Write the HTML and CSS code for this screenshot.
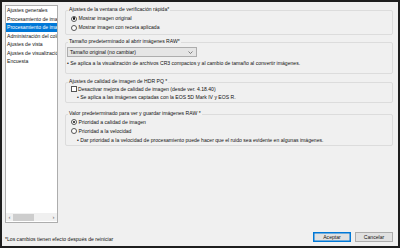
FILE: index.html
```html
<!DOCTYPE html>
<html lang="es">
<head>
    <meta charset="UTF-8">
    <meta name="viewport" content="width=device-width, initial-scale=1.0">
    <title>Preferencias</title>
    <link rel="stylesheet" href="styles.css">
</head>
<body>
<div class="window">
    <div class="main">
        <div class="sidebar">
            <ul class="nav-list">
                <li>Ajustes generales</li>
                <li>Procesamiento de imagen RAW</li>
                <li class="selected">Procesamiento de imagen HDR</li>
                <li>Administración del color</li>
                <li>Ajustes de vista</li>
                <li>Ajustes de visualización</li>
                <li>Encuesta</li>
            </ul>
            <div class="hscroll">
                <span class="arrow">&lsaquo;</span>
                <span class="track"><span class="thumb"></span></span>
                <span class="arrow">&rsaquo;</span>
            </div>
        </div>

        <div class="settings">
            <div class="group g1">
                <div class="group-title">Ajustes de la ventana de verificación rápida*</div>
                <div class="rows">
                    <div class="option"><span class="radio checked"></span>Mostrar imagen original</div>
                    <div class="option"><span class="radio"></span>Mostrar imagen con receta aplicada</div>
                </div>
            </div>

            <div class="group g2">
                <div class="group-title">Tamaño predeterminado al abrir imágenes RAW*</div>
                <div class="combo">
                    <span>Tamaño original (no cambiar)</span>
                    <svg width="5" height="3" viewBox="0 0 5 3"><polyline points="0.5,0.5 2.5,2.5 4.5,0.5" fill="none" stroke="#555" stroke-width="0.7"/></svg>
                </div>
                <div class="note">• Se aplica a la visualización de archivos CR3 compactos y al cambio de tamaño al convertir imágenes.</div>
            </div>

            <div class="group g3">
                <div class="group-title">Ajustes de calidad de imagen de HDR PQ *</div>
                <div class="rows">
                    <div class="option"><span class="checkbox"></span>Desactivar mejora de calidad de imagen (desde ver. 4.18.40)</div>
                    <div class="note indent">• Se aplica a las imágenes captadas con la EOS 5D Mark IV y EOS R.</div>
                </div>
            </div>

            <div class="group g4">
                <div class="group-title">Valor predeterminado para ver y guardar imágenes RAW *</div>
                <div class="rows">
                    <div class="option"><span class="radio checked"></span>Prioridad a calidad de imagen</div>
                    <div class="option"><span class="radio"></span>Prioridad a la velocidad</div>
                    <div class="note indent">• Dar prioridad a la velocidad de procesamiento puede hacer que el ruido sea evidente en algunas imágenes.</div>
                </div>
            </div>
        </div>
    </div>

    <div class="footer">
        <span class="footnote">*Los cambios tienen efecto después de reiniciar</span>
        <button class="btn btn-default">Aceptar</button>
        <button class="btn">Cancelar</button>
    </div>
</div>
</body>
</html>
```

FILE: styles.css
```css
html, body {
    margin: 0;
    padding: 0;
    background: #1e1e1e;
}
body {
    font-family: "Liberation Sans", Arial, sans-serif;
    font-size: 5.1px;
    color: #111;
}
.window {
    height: 248px;
    box-sizing: border-box;
    border: 2px solid #1e1e1e;
    background: #f0f0f0;
    display: flex;
    flex-direction: column;
}
.main {
    display: flex;
    gap: 7px;
    padding: 3px 5px 0 3px;
}

/* left list */
.sidebar {
    width: 53px;
    height: 218px;
    box-sizing: border-box;
    border: 1px solid #adadad;
    background: #fff;
    display: flex;
    flex-direction: column;
}
.nav-list {
    list-style: none;
    margin: 0;
    padding: 0;
    flex: 1;
    overflow: hidden;
}
.nav-list li {
    height: 8.5px;
    line-height: 8.5px;
    padding-left: 1px;
    white-space: nowrap;
    overflow: hidden;
}
.nav-list li.selected {
    background: #0078d7;
    color: #fff;
}
.hscroll {
    height: 8px;
    display: flex;
    align-items: center;
    background: #f0f0f0;
    margin-bottom: 1px;
}
.hscroll .arrow {
    width: 7px;
    text-align: center;
    font-size: 6px;
    line-height: 8px;
    color: #606060;
}
.hscroll .track {
    flex: 1;
    height: 8px;
    display: flex;
    align-items: center;
}
.hscroll .thumb {
    width: 21px;
    height: 7px;
    background: #cdcdcd;
}

/* settings */
.settings {
    flex: 1;
}
.group {
    border: 1px solid #dcdcdc;
    border-radius: 2px;
    padding-left: 1px;
}
.group-title {
    width: fit-content;
    margin: -5px 0 0 1px;
    padding: 0 1px;
    line-height: 6px;
    background: #f0f0f0;
    white-space: nowrap;
}
.g1 { margin-top: 5px; padding-bottom: 1.5px; }
.g1 .rows { margin-top: 2px; }
.g2 { margin-top: 7.5px; padding-bottom: 5px; }
.g3 { margin-top: 8px; }
.g3 .rows { margin-top: 1px; }
.g3 .option, .g3 .note { height: 8.5px; line-height: 8.5px; }
.g4 { margin-top: 11.5px; }
.g4 .rows { margin-top: 1.5px; }

.option {
    height: 9px;
    line-height: 9px;
    display: flex;
    align-items: center;
    padding-left: 4px;
    white-space: nowrap;
}
.radio {
    width: 6px;
    height: 6px;
    box-sizing: border-box;
    border: 0.8px solid #555;
    border-radius: 50%;
    background: #fff;
    margin-right: 1.5px;
    display: flex;
    align-items: center;
    justify-content: center;
}
.radio.checked::after {
    content: "";
    width: 2.4px;
    height: 2.4px;
    border-radius: 50%;
    background: #111;
}
.checkbox {
    width: 5.5px;
    height: 5.5px;
    box-sizing: border-box;
    border: 0.8px solid #555;
    background: #fff;
    margin-right: 1.5px;
}
.combo {
    width: 130px;
    height: 10px;
    margin-top: 3px;
    box-sizing: border-box;
    border: 1px solid #adadad;
    background: #e5e5e5;
    display: flex;
    align-items: center;
    justify-content: space-between;
    padding: 0 3px 0 2px;
}
.note {
    height: 9px;
    line-height: 9px;
    white-space: nowrap;
}
.g2 .note {
    margin-top: 1.5px;
}
.note.indent {
    padding-left: 10px;
}

/* bottom bar */
.footer {
    flex: 1;
    display: flex;
    align-items: flex-end;
    gap: 4px;
    padding: 0 5px 4px 3px;
}
.footnote {
    flex: 1;
    line-height: 6px;
}
.btn {
    width: 38px;
    height: 10px;
    box-sizing: border-box;
    border: 1px solid #adadad;
    background: #e1e1e1;
    color: #111;
    font-family: inherit;
    font-size: 5.1px;
    padding: 0;
    margin: 0;
}
.btn-default {
    border-color: #0078d7;
    box-shadow: inset 0 0 0 0.5px #0078d7;
}
```
